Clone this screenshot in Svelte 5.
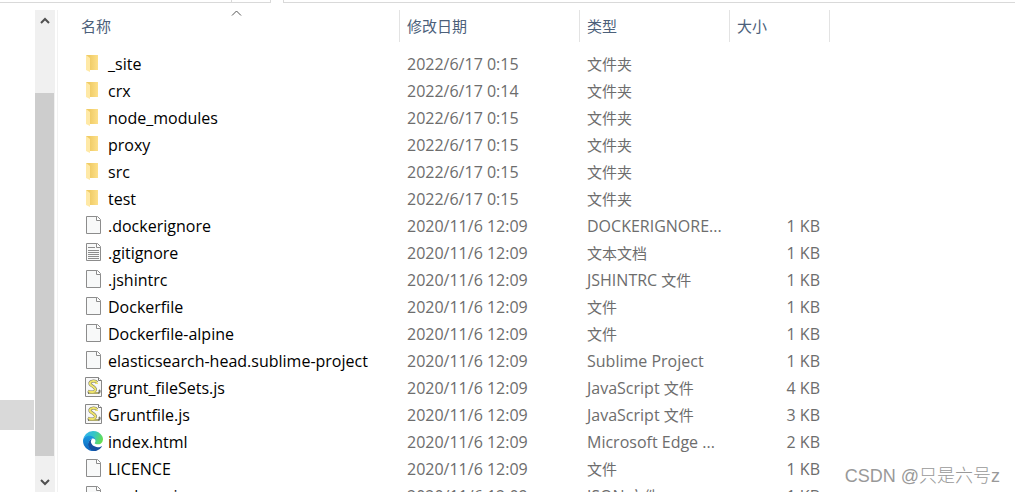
<script>
  const columns = [
    { key: 'name', label: '名称', sorted: true },
    { key: 'date', label: '修改日期' },
    { key: 'type', label: '类型' },
    { key: 'size', label: '大小' }
  ]

  const files = [
    { icon: 'folder', name: '_site', date: '2022/6/17 0:15', type: '', kind: '文件夹', size: '' },
    { icon: 'folder', name: 'crx', date: '2022/6/17 0:14', type: '', kind: '文件夹', size: '' },
    { icon: 'folder', name: 'node_modules', date: '2022/6/17 0:15', type: '', kind: '文件夹', size: '' },
    { icon: 'folder', name: 'proxy', date: '2022/6/17 0:15', type: '', kind: '文件夹', size: '' },
    { icon: 'folder', name: 'src', date: '2022/6/17 0:15', type: '', kind: '文件夹', size: '' },
    { icon: 'folder', name: 'test', date: '2022/6/17 0:15', type: '', kind: '文件夹', size: '' },
    { icon: 'file', name: '.dockerignore', date: '2020/11/6 12:09', type: 'DOCKERIGNORE...', kind: '', size: '1 KB' },
    { icon: 'text', name: '.gitignore', date: '2020/11/6 12:09', type: '', kind: '文本文档', size: '1 KB' },
    { icon: 'file', name: '.jshintrc', date: '2020/11/6 12:09', type: 'JSHINTRC ', kind: '文件', size: '1 KB' },
    { icon: 'file', name: 'Dockerfile', date: '2020/11/6 12:09', type: '', kind: '文件', size: '1 KB' },
    { icon: 'file', name: 'Dockerfile-alpine', date: '2020/11/6 12:09', type: '', kind: '文件', size: '1 KB' },
    { icon: 'file', name: 'elasticsearch-head.sublime-project', date: '2020/11/6 12:09', type: 'Sublime Project', kind: '', size: '1 KB' },
    { icon: 'script', name: 'grunt_fileSets.js', date: '2020/11/6 12:09', type: 'JavaScript ', kind: '文件', size: '4 KB' },
    { icon: 'script', name: 'Gruntfile.js', date: '2020/11/6 12:09', type: 'JavaScript ', kind: '文件', size: '3 KB' },
    { icon: 'edge', name: 'index.html', date: '2020/11/6 12:09', type: 'Microsoft Edge ...', kind: '', size: '2 KB' },
    { icon: 'file', name: 'LICENCE', date: '2020/11/6 12:09', type: '', kind: '文件', size: '1 KB' },
    { icon: 'file', name: 'package.json', date: '2020/11/6 12:09', type: 'JSON ', kind: '文件', size: '1 KB' }
  ]
</script>

{#snippet fileIcon(kind)}
  {#if kind === 'edge'}
    <svg class="icon" width="20" height="20" viewBox="0 0 256 256" aria-hidden="true">
      <path fill="#1450a0" d="M235.680 195.460a93.730 93.730 0 0 1-10.540 4.710 101.870 101.870 0 0 1-35.900 6.460c-47.320 0-88.540-32.550-88.540-74.320A31.480 31.480 0 0 1 117.130 105c-42.800 1.800-53.800 46.400-53.800 72.530 0 73.880 68.090 81.370 82.760 81.370 7.910 0 19.840-2.300 27-4.560l1.310-.440a128.340 128.340 0 0 0 66.600-52.800 4 4 0 0 0-5.320-5.640z" />
      <path fill="url(#sea)" d="M105.730 241.420a79.200 79.200 0 0 1-22.740-21.340 80.720 80.720 0 0 1 29.530-120c3.120-1.470 8.450-4.130 15.540-4a32.350 32.350 0 0 1 25.690 13 31.880 31.880 0 0 1 6.360 18.660c0-.210 24.460-79.600-80-79.600-43.900 0-80 41.660-80 78.210a130.150 130.150 0 0 0 12.110 56 128 128 0 0 0 156.380 67.110 75.550 75.550 0 0 1-62.780-8z" />
      <path fill="url(#wave)" d="M152.330 148.860c-.810 1.050-3.300 2.500-3.300 5.660 0 2.610 1.700 5.120 4.720 7.230 14.380 10 41.490 8.680 41.560 8.680a59.560 59.560 0 0 0 30.270-8.350 61.380 61.380 0 0 0 30.430-52.880c.260-22.410-8-37.310-11.340-43.910C223.460 23.840 177.720 0 128 0A128 128 0 0 0 0 126.200c.480-36.540 36.800-66.050 80-66.050 3.500 0 23.460.340 42 10.070 16.340 8.580 24.900 18.940 30.850 29.210 6.180 10.670 7.280 24.150 7.280 29.520s-2.740 13.330-7.800 19.910z" />
    </svg>
  {:else}
    <svg class="icon" width="20" height="20" viewBox="0 0 20 20" aria-hidden="true">
      {#if kind === 'folder'}
        <path d="M3 2h8v14H6z" fill="#f0cc66" />
        <path d="M8 2h7v15H6V4z" fill="url(#paper)" />
        <path d="M3 2l4 3v14l-4-2z" fill="#ffe9a6" />
      {:else if kind === 'script'}
        <path d="M2.500.500h13l3 3v16h-16z" fill="#f8f8f8" stroke="#888" />
        <path d="M15.500.500v3h3" fill="#fff" stroke="#777" />
        <path d="M14 5.500C12 3 6 4 7 7c1 2 6 3 5.500 6-.500 2-4 3-7.500 1" fill="none" stroke="#77776a" stroke-width="3" />
        <path d="M5 16h10c2 0 2-2 1-3" fill="none" stroke="#77776a" stroke-width="2" />
        <path d="M14 5.500C12 3 6 4 7 7c1 2 6 3 5.500 6-.500 2-4 3-7 1" fill="none" stroke="#eee36a" stroke-width="2" />
        <path d="M12 6.500h3M6 16h9" fill="none" stroke="#eee36a" />
      {:else}
        <path d="M3.500 1.500h11l3 3v14h-14z" fill="#f8f9f9" stroke="#8c8c8c" />
        <path d="M13.500 1.500v4h4" fill="#fff" stroke="#8c8c8c" />
        {#if kind === 'text'}
          <path d="M5 5.500h7M5 8.500h11M5 10.500h11M5 12.500h11M5 14.500h11M5 16.500h11" stroke="#8c8c8c" />
        {/if}
      {/if}
    </svg>
  {/if}
{/snippet}

<svg class="defs" width="0" height="0" aria-hidden="true">
  <linearGradient id="wave" x1="0" y1="0.3" x2="1" y2="0.6">
    <stop offset="0.1" stop-color="#30b4e8" />
    <stop offset="0.5" stop-color="#35c5c5" />
    <stop offset="1" stop-color="#66e04f" />
  </linearGradient>
  <linearGradient id="sea" x1="0" y1="0" x2="0" y2="1">
    <stop offset="0" stop-color="#1b9de2" />
    <stop offset="1" stop-color="#0c62bd" />
  </linearGradient>
  <linearGradient id="paper" x1="0" y1="0" x2="1" y2="0">
    <stop offset="0" stop-color="#efca64" />
    <stop offset="1" stop-color="#fde08a" />
  </linearGradient>
</svg>

<div class="explorer">
  <div class="toolbar">
    <div class="address"></div>
    <div class="refresh"></div>
    <div class="search"></div>
  </div>

  <div class="body">
    <nav class="tree" aria-label="导航窗格">
      <div class="selected"></div>
    </nav>

    <div class="scrollbar">
      <button aria-label="向上滚动">
        <svg width="12" height="8" viewBox="0 0 12 8"><path d="M2 6l4-4 4 4" /></svg>
      </button>
      <div class="track"><div class="thumb"></div></div>
      <button aria-label="向下滚动">
        <svg width="12" height="8" viewBox="0 0 12 8"><path d="M2 2l4 4 4-4" /></svg>
      </button>
    </div>

    <main>
      <table>
        <thead>
          <tr>
            {#each columns as column}
              <th class={column.key} scope="col">
                {column.label}
                {#if column.sorted}
                  <svg class="sort" width="11" height="7" viewBox="0 0 11 7" aria-hidden="true"><path d="M1 5.500l4.500-4.500 4.500 4.500" /></svg>
                {/if}
              </th>
            {/each}
          </tr>
        </thead>
        <tbody>
          {#each files as file}
            <tr>
              <td class="name"><div class="file">{@render fileIcon(file.icon)}<span>{file.name}</span></div></td>
              <td>{file.date}</td>
              <td>{file.type}<span class="cjk">{file.kind}</span></td>
              <td class="size">{file.size}</td>
            </tr>
          {/each}
        </tbody>
      </table>
    </main>
  </div>

  <div class="watermark">CSDN @只是六号z</div>
</div>

<style>
  :global(body) {
    background: #fff;
  }

  .explorer {
    position: relative;
    display: flex;
    flex-direction: column;
    box-sizing: border-box;
    height: 100vh;
    padding-bottom: 2px;
    overflow: hidden;
    font-family: "Open Sans", "Noto Sans CJK SC", sans-serif;
    font-size: 16px;
    color: #6d6d6d;
  }

  .defs {
    position: absolute;
  }

  .toolbar {
    display: flex;
    flex: none;
    height: 3px;
    margin-bottom: 7px;
  }

  .toolbar div {
    box-sizing: border-box;
    border: 1px solid #d9d9d9;
    border-top: 0;
    border-left: 0;
  }

  .toolbar .address {
    width: 232px;
  }

  .toolbar .refresh {
    width: 39px;
  }

  .toolbar .search {
    flex: 1;
    margin-left: 12px;
    border-left: 1px solid #d9d9d9;
    border-right: 0;
  }

  .body {
    display: flex;
    flex: 1;
    min-height: 0;
    overflow: hidden;
  }

  .tree {
    display: flex;
    flex-direction: column;
    justify-content: flex-end;
    width: 35px;
    padding-bottom: 62px;
    box-sizing: border-box;
  }

  .selected {
    width: 34px;
    height: 30px;
    background: #d9d9d9;
  }

  .scrollbar {
    display: flex;
    flex-direction: column;
    width: 20px;
    background: #f0f0f0;
  }

  .scrollbar button {
    display: grid;
    place-items: center;
    height: 21px;
    padding: 0;
    border: 0;
    background: none;
  }

  .scrollbar path {
    fill: none;
    stroke: #505050;
    stroke-width: 2;
  }

  .track {
    flex: 1;
    display: flex;
    flex-direction: column;
    justify-content: flex-end;
    padding-bottom: 15px;
  }

  .thumb {
    width: 19px;
    height: 85.5%;
    background: #cdcdcd;
  }

  main {
    flex: 1;
    min-width: 0;
    margin-left: 2px;
    padding-left: 16px;
    border-left: 1px solid #f2f2f2;
    overflow: hidden;
  }

  table {
    table-layout: fixed;
    width: 756px;
    border-collapse: separate;
    border-spacing: 0;
  }

  th {
    position: relative;
    box-sizing: border-box;
    height: 32px;
    padding: 0 7px 2px;
    border-right: 1px solid #e3e3e3;
    font-size: 15px;
    font-weight: 400;
    text-align: left;
    color: #4c607a;
  }

  th.name {
    width: 326px;
  }

  th.date {
    width: 180px;
  }

  th.type {
    width: 150px;
  }

  th.size {
    width: 100px;
  }

  .sort {
    position: absolute;
    top: 0;
    left: 50%;
    margin-left: -6px;
  }

  .sort path {
    fill: none;
    stroke: #555;
  }

  tbody::before {
    content: "";
    display: block;
    height: 9px;
  }

  td {
    height: 27px;
    padding: 0 7px;
    line-height: 26px;
    vertical-align: top;
    white-space: nowrap;
    overflow: hidden;
  }

  .file {
    display: flex;
    color: #000;
  }

  .icon {
    flex: none;
    margin: 2px 5px 0 2px;
  }

  .cjk {
    font-size: 15px;
    line-height: 1;
  }

  td.size {
    padding-right: 10px;
    text-align: right;
  }

  .watermark {
    position: absolute;
    right: 15px;
    bottom: 7px;
    font-family: "Liberation Sans", "Noto Sans CJK SC", sans-serif;
    font-size: 18px;
    font-weight: 300;
    color: #999;
  }
</style>
